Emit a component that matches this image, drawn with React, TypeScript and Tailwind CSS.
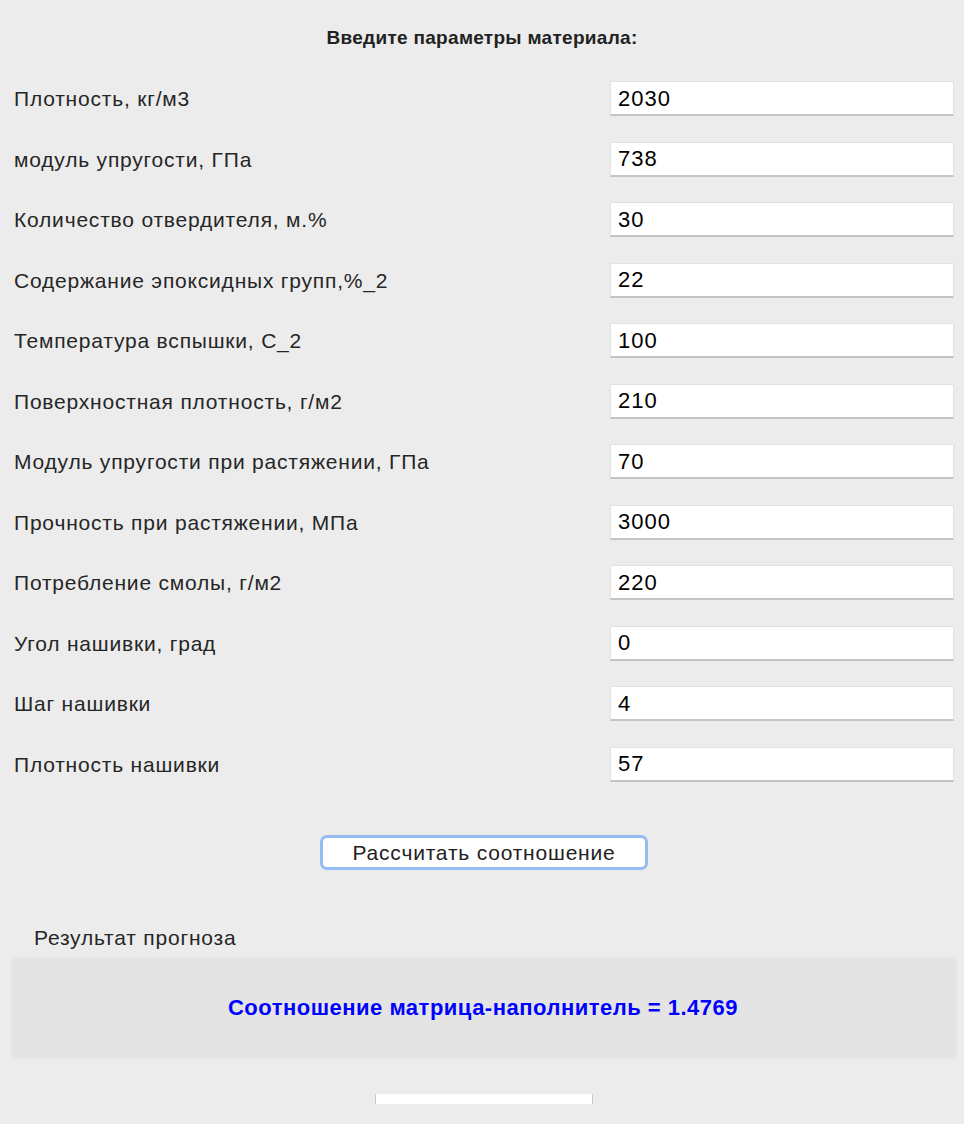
const fields: [string, string][] = [
  ['Плотность, кг/м3', '2030'],
  ['модуль упругости, ГПа', '738'],
  ['Количество отвердителя, м.%', '30'],
  ['Содержание эпоксидных групп,%_2', '22'],
  ['Температура вспышки, С_2', '100'],
  ['Поверхностная плотность, г/м2', '210'],
  ['Модуль упругости при растяжении, ГПа', '70'],
  ['Прочность при растяжении, МПа', '3000'],
  ['Потребление смолы, г/м2', '220'],
  ['Угол нашивки, град', '0'],
  ['Шаг нашивки', '4'],
  ['Плотность нашивки', '57'],
]

export default function App() {
  return (
    <div
      className="w-[964px] h-[1124px] overflow-hidden bg-[#ececec] text-[#262626]"
      style={{ fontFamily: '"Liberation Sans", "Noto Sans CJK SC", sans-serif' }}
    >
      {/* заголовок */}
      <div className="pt-[27px] h-[81px] text-center text-[19px] tracking-[0.3px] font-bold leading-[22px] text-[#222]">
        Введите параметры материала:
      </div>

      {/* поля ввода */}
      <div className="flex flex-col gap-[25.5px] pl-[14px] pr-[10px]">
        {fields.map(([label, value]) => (
          <div key={label} className="flex items-center justify-between h-[35px]">
            <span className="text-[21px] tracking-[0.8px] leading-none">{label}</span>
            <div className="w-[344px] h-[35px] bg-white border-t border-x border-[#e2e2e2] border-b-2 border-b-[#c4c4c4] flex items-center pl-[7px] text-[22px] tracking-[1px] text-black">
              {value}
            </div>
          </div>
        ))}
      </div>

      {/* кнопка */}
      <div className="flex justify-center pt-[53px] pl-[4px]">
        <button className="w-[328px] h-[35px] bg-white rounded-[7px] border-[3px] border-[#93bcf2] text-[21px] tracking-[0.8px] text-[#222] leading-none">
          Рассчитать соотношение
        </button>
      </div>

      {/* результат */}
      <div className="pt-[55px] pl-[34px] text-[21px] tracking-[0.8px] leading-[26px] text-[#262626]">
        Результат прогноза
      </div>
      <div className="mx-[11px] mt-[6px] w-[946px] h-[102px] rounded-[6px] bg-[#e4e4e4] flex items-center justify-center pr-[2px]">
        <span className="text-[22px] tracking-[0.5px] font-bold text-[#0000ff]">
          Соотношение матрица-наполнитель = 1.4769
        </span>
      </div>

      <div className="flex justify-center pt-[35px] pl-[3px]">
        <div className="w-[218px] h-[10px] bg-white border-x border-[#c8c8c8]" />
      </div>
    </div>
  )
}
